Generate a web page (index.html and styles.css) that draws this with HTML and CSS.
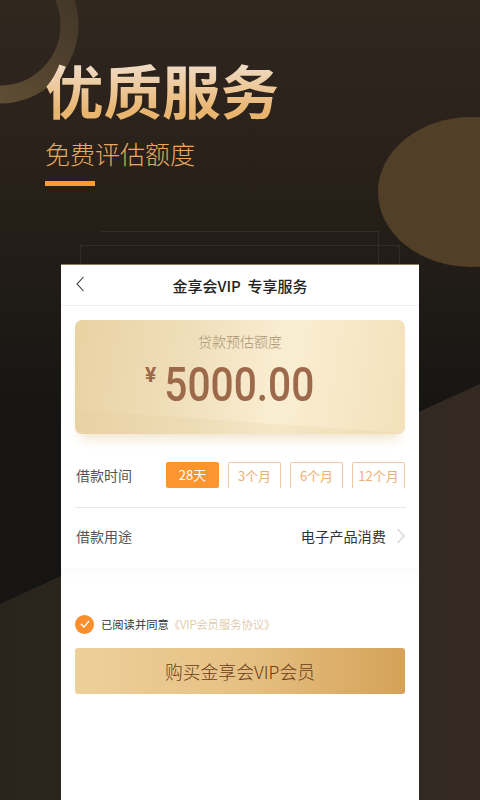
FILE: index.html
```html
<!DOCTYPE html>
<html lang="zh-CN">
<head>
<meta charset="utf-8">
<title>优质服务</title>
<link rel="stylesheet" href="styles.css">
</head>
<body>
<div class="page">
  <svg class="backdrop" width="480" height="800" viewBox="0 0 480 800" aria-hidden="true">
    <defs>
      <linearGradient id="bg" x1="0" y1="0" x2="0" y2="1">
        <stop offset="0" stop-color="#30271f"/>
        <stop offset="0.45" stop-color="#272019"/>
        <stop offset="1" stop-color="#161513"/>
      </linearGradient>
      <linearGradient id="ring" x1="1" y1="0" x2="0" y2="1">
        <stop offset="0" stop-color="#3c3226"/>
        <stop offset="1" stop-color="#6a5638"/>
      </linearGradient>
      <linearGradient id="low" x1="0" y1="0" x2="1" y2="0">
        <stop offset="0" stop-color="#29241c"/>
        <stop offset="1" stop-color="#342a23"/>
      </linearGradient>
    </defs>
    <rect width="480" height="420" fill="url(#bg)"/>
    <rect y="420" width="480" height="380" fill="#161513"/>
    <path d="M0 604L480 384V800H0Z" fill="url(#low)"/>
    <circle cx="0" cy="25" r="69.5" fill="none" stroke="url(#ring)" stroke-width="18"/>
    <ellipse cx="471" cy="192" rx="93" ry="75" fill="#513f28"/>
  </svg>
  <div class="ghost ghost-back"></div>
  <div class="ghost ghost-front"></div>

  <header class="hero">
    <h1 class="title">优质服务</h1>
    <p class="subtitle">免费评估额度</p>
    <div class="accent"></div>
  </header>

  <main class="phone">
    <div class="navbar">
      <svg class="back" width="10" height="16" viewBox="0 0 10 16" aria-hidden="true"><path d="M8.5 1L2 8l6.5 7" fill="none" stroke="#333" stroke-width="1.1"/></svg>
      <span class="nav-title">金享会VIP&nbsp;&nbsp;专享服务</span>
    </div>

    <section class="quota">
      <div class="quota-label">贷款预估额度</div>
      <div class="quota-value"><span class="yen">¥</span><span class="amount">5000.00</span></div>
    </section>

    <div class="row row-term">
      <span class="row-label">借款时间</span>
      <div class="terms">
        <span class="term term-on">28天</span>
        <span class="term">3个月</span>
        <span class="term">6个月</span>
        <span class="term">12个月</span>
      </div>
    </div>

    <div class="row row-use">
      <span class="row-label">借款用途</span>
      <span class="use-value">电子产品消费
        <svg width="10" height="16" viewBox="0 0 10 16" aria-hidden="true"><path d="M1.5 1L8 8l-6.5 7" fill="none" stroke="#d4d4d4" stroke-width="1.2"/></svg>
      </span>
    </div>
    <div class="band"></div>

    <div class="agree">
      <span class="check"><svg width="12" height="10" viewBox="0 0 12 10" aria-hidden="true"><path d="M2 5l3 3 5-6" fill="none" stroke="#fff" stroke-width="1.3"/></svg></span>
      <span class="agree-text">已阅读并同意</span>
      <span class="agree-link">《VIP会员服务协议》</span>
    </div>

    <button class="buy">购买金享会VIP会员</button>
  </main>
</div>
</body>
</html>
```
FILE: styles.css
```css
* { box-sizing: border-box; margin: 0; padding: 0; }
html, body { width: 480px; height: 800px; overflow: hidden; }
body { font-family: "Noto Sans CJK SC", "Noto Sans", sans-serif; background: #161513; }
.page { position: relative; width: 480px; height: 800px; overflow: hidden; display: flex; flex-direction: column; }
.backdrop { position: absolute; left: 0; top: 0; }
.ghost { position: absolute; border: 1px solid rgba(255,255,255,.07); }
.ghost-back { left: 101px; top: 231px; width: 278px; height: 40px; border-left: 0; }
.ghost-front { left: 80px; top: 245px; width: 320px; height: 30px; }

.hero { position: relative; padding: 57px 0 0 45px; height: 264px; }
.title {
  font-size: 58.5px; line-height: 64px; font-weight: 700;
  width: 240px;
  background: linear-gradient(180deg, #f0dcc8 10%, #e9b56e 85%);
  -webkit-background-clip: text; background-clip: text; color: transparent;
}
.subtitle { margin-top: 14px; font-size: 25px; line-height: 36px; font-weight: 300; color: #eaa95e; }
.accent { margin-top: 10px; width: 50px; height: 5px; background: #fb9d2f; }

.phone { position: relative; margin-left: 61px; width: 358px; flex: 1; background: #fff; border-top: 1px solid #8d7a5c; display: flex; flex-direction: column; }
.navbar { height: 41px; display: flex; align-items: center; justify-content: center; position: relative; border-bottom: 1px solid #eee; flex: none; }
.back { position: absolute; left: 14px; top: 11px; }
.nav-title { font-size: 15px; font-weight: 500; color: #222; }

.quota {
  margin: 14px 14px 0; height: 114px; border-radius: 7px; flex: none; text-align: center;
  background:
    linear-gradient(184deg, rgba(226,200,150,0) 82%, rgba(226,200,150,.2) 83%),
    linear-gradient(100deg, #e9d2a3 0%, #f0dfbb 35%, #faeed2 62%, #f3e1ba 100%);
  box-shadow: 0 10px 12px -6px rgba(222,190,130,.45);
  padding-top: 11px;
}
.quota-label { font-size: 14px; line-height: 20px; color: #a99172; font-weight: 300; }
.quota-value { display: flex; justify-content: center; align-items: flex-start; margin-top: 6px; color: #9c6a4a; padding-left: 2px; }
.yen { font-family: "Roboto", sans-serif; font-size: 21px; font-weight: 700; line-height: 30px; margin-top: 3px; margin-right: -7px; margin-left: -7px; }
.amount { display: inline-block; font-family: "Roboto", sans-serif; font-size: 49px; line-height: 56px; font-weight: 500; transform: scaleX(.83); }

.row { display: flex; align-items: center; justify-content: space-between; margin: 0 13px 0 15px; flex: none; }
.row-label { font-size: 14px; color: #555; }
.row-term { margin-top: 28px; height: 46px; padding-bottom: 20px; border-bottom: 1px solid #e8e8e8; align-items: flex-start; margin-left: 14px; }
.row-term .row-label { line-height: 26px; margin-left: 1px; }
.terms { display: flex; gap: 9px; margin-right: 1px; }
.term { width: 53px; height: 26px; line-height: 26px; text-align: center; font-size: 13px; color: #eeaf73; border: 1px solid #f0c9a0; border-bottom: 0; border-radius: 2px 2px 0 0; }
.term-on { background: #fc9530; color: #fff; border: 0; border-radius: 2px; }
.row-use { height: 56px; }
.use-value { display: flex; align-items: center; gap: 10px; font-size: 14.2px; color: #333; }
.band { flex: none; height: 14px; margin-top: 4px; background: linear-gradient(180deg, #fbfbfb, #fff); }

.agree { display: flex; align-items: center; margin: 32px 0 0 14px; height: 20px; flex: none; }
.check { width: 19px; height: 19px; border-radius: 50%; background: #fb8f2e; display: flex; align-items: center; justify-content: center; margin-right: 7px; }
.agree-text { font-size: 11.3px; color: #333; }
.agree-link { font-size: 11.3px; color: #d3b48b; font-weight: 300; }

.buy {
  display: block; margin: 14px 14px 0; width: 330px; height: 46px; border: 0; border-radius: 3px; flex: none;
  background: linear-gradient(90deg, #edd09a 0%, #e6c184 50%, #d5a258 100%);
  font-family: inherit; font-size: 17.8px; font-weight: 300; color: #6b3c16;
}
```
